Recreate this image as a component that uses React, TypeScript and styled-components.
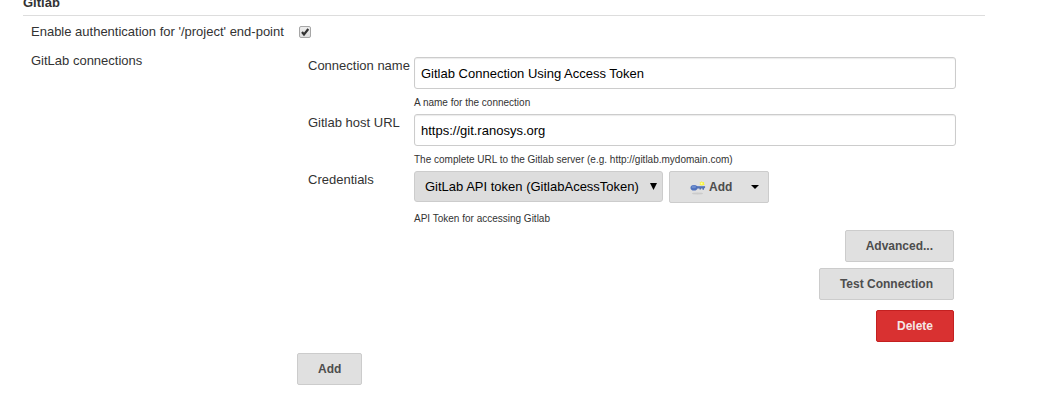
import React from "react";
import styled, { createGlobalStyle, css } from "styled-components";

const GlobalStyle = createGlobalStyle`
  *, *::before, *::after { box-sizing: border-box; }
  body {
    margin: 0;
    background: #fff;
    color: #333;
    font: 13px/16px "Liberation Sans", Arial, sans-serif;
  }
  button, input, select { font-family: inherit; }
`;

const Section = styled.form`
  margin: 0 57px 0 23px;
`;

const SectionTitle = styled.h2`
  margin: -5px 0 8px;
  padding-bottom: 4px;
  border-bottom: 1px solid #ddd;
  font-size: 13px;
  line-height: 16px;
`;

const Setting = styled.div`
  display: grid;
  grid-template-columns: 266px minmax(0, 1fr);
  padding-left: 8px;
  margin-bottom: 13px;
`;

const SettingLabel = styled.label``;

const CheckHolder = styled.span`
  position: relative;
  display: block;
  width: 12px;
  height: 12px;
  margin: 2px;
`;

const Checkbox = styled.input`
  appearance: none;
  display: block;
  width: 100%;
  height: 100%;
  margin: 0;
  border: 1px solid #a6a6a6;
  border-radius: 2px;
  background: linear-gradient(#ededed, #dedede);
  & + svg { display: none; }
  &:checked + svg { display: block; }
`;

const CheckMark = styled.svg`
  position: absolute;
  inset: 0;
  pointer-events: none;
`;

const Connection = styled.div`
  padding: 4px 29px 0 11px;
`;

const Field = styled.div`
  display: grid;
  grid-template-columns: 106px minmax(0, 1fr);
`;

const FieldLabel = styled.label`
  padding-top: 1px;
  white-space: nowrap;
`;

const TextInput = styled.input`
  display: block;
  width: 100%;
  height: 32px;
  padding: 0 6px;
  border: 1px solid #ccc;
  border-radius: 3px;
  box-shadow: inset 0 1px 1px rgba(0, 0, 0, 0.08);
  background: #fff;
  color: #000;
  font-size: 13px;
`;

const Help = styled.p<{ $spacious?: boolean }>`
  margin: ${(p) => (p.$spacious ? "9px 0 5px" : "7px 0 5px")};
  font-size: 10px;
  line-height: 13px;
`;

const CredentialRow = styled.div`
  display: flex;
  gap: 6px;
`;

const SelectHolder = styled.span`
  position: relative;
  height: 31px;
`;

const Select = styled.select`
  appearance: none;
  height: 100%;
  padding: 0 22px 0 10px;
  border: 1px solid #ccc;
  border-radius: 3px;
  background: #ddd;
  color: #000;
  font-size: 13px;
`;

const SelectArrow = styled.svg`
  position: absolute;
  right: 6px;
  top: 12px;
  pointer-events: none;
`;

const Button = styled.button<{ $danger?: boolean }>`
  display: inline-flex;
  align-items: center;
  height: 32px;
  padding: 0 20px;
  border: 1px solid #ccc;
  border-radius: 2px;
  background: #e0e0e0;
  color: #4d4d4d;
  font-size: 12px;
  font-weight: bold;
  ${(p) =>
    p.$danger &&
    css`
      border-color: #c42020;
      background: #d93131;
      color: #f5e6e6;
    `}
`;

const MenuButton = styled(Button)`
  padding-right: 9px;
`;

const KeyIcon = styled.svg`
  margin-right: 3px;
`;

const Caret = styled.svg`
  margin-left: 19px;
`;

const Actions = styled.div`
  display: flex;
  flex-direction: column;
  align-items: flex-end;
  gap: 6px;
  padding-right: 2px;
`;

const DeleteRow = styled.div`
  padding-top: 4px;
`;

const AddRow = styled.div`
  margin-top: 11px;
`;

const Key = () => (
  <KeyIcon width="16" height="16" viewBox="0 0 16 16" aria-hidden="true">
    <ellipse cx="7.5" cy="14.5" rx="5.5" ry="0.9" fill="#cbcbcb" />
    <path d="M11.500 2l1 1.200 1.700-.2-.3 1.500.9 1-1.400.8-2.200.3-1.600-.9.500-1.200-.4-1.400 1.400.2z" fill="#f8f53a" />
    <circle cx="11.600" cy="4.400" r="1" fill="#fdfcb0" />
    <path d="M5 7h9.500l.8 1-.8 1.300H14v1.500h-1.500V9.500H11v1H9.500v-1H6z" fill="#526fae" />
    <path d="M6 7.700h8.500" stroke="#7f9bd2" strokeWidth="0.700" />
    <ellipse cx="4" cy="8.700" rx="3.500" ry="2.800" fill="#4f71bd" />
    <ellipse cx="3.800" cy="7.900" rx="2.300" ry="1.300" fill="#6d8dce" />
  </KeyIcon>
);

export default function App() {
  return (
    <>
      <GlobalStyle />
      <Section onSubmit={(e) => e.preventDefault()}>
        <SectionTitle>Gitlab</SectionTitle>
        <Setting>
          <SettingLabel htmlFor="auth">Enable authentication for '/project' end-point</SettingLabel>
          <CheckHolder>
            <Checkbox id="auth" type="checkbox" defaultChecked />
            <CheckMark width="12" height="12" viewBox="0 0 12 12" aria-hidden="true">
              <path d="M3 6l2 2.500L9.300 3" fill="none" stroke="#333" strokeWidth="2.200" />
            </CheckMark>
          </CheckHolder>
        </Setting>
        <Setting>
          <SettingLabel as="span">GitLab connections</SettingLabel>
          <div>
            <Connection>
              <Field>
                <FieldLabel htmlFor="name">Connection name</FieldLabel>
                <div>
                  <TextInput id="name" type="text" defaultValue="Gitlab Connection Using Access Token" />
                  <Help>A name for the connection</Help>
                </div>
              </Field>
              <Field>
                <FieldLabel htmlFor="host">Gitlab host URL</FieldLabel>
                <div>
                  <TextInput id="host" type="text" defaultValue="https://git.ranosys.org" />
                  <Help>The complete URL to the Gitlab server (e.g. http://gitlab.mydomain.com)</Help>
                </div>
              </Field>
              <Field>
                <FieldLabel htmlFor="credentials">Credentials</FieldLabel>
                <div>
                  <CredentialRow>
                    <SelectHolder>
                      <Select id="credentials">
                        <option>GitLab API token (GitlabAcessToken)</option>
                      </Select>
                      <SelectArrow width="7" height="7" viewBox="0 0 7 7" aria-hidden="true">
                        <path d="M0 0h7L3.500 7z" />
                      </SelectArrow>
                    </SelectHolder>
                    <MenuButton type="button">
                      <Key />
                      Add
                      <Caret width="8" height="4" viewBox="0 0 8 4" aria-hidden="true">
                        <path d="M0 0h8L4 4z" />
                      </Caret>
                    </MenuButton>
                  </CredentialRow>
                  <Help $spacious>API Token for accessing Gitlab</Help>
                </div>
              </Field>
              <Actions>
                <Button type="button">Advanced...</Button>
                <Button type="button">Test Connection</Button>
                <DeleteRow>
                  <Button type="button" $danger>Delete</Button>
                </DeleteRow>
              </Actions>
            </Connection>
            <AddRow>
              <Button type="button">Add</Button>
            </AddRow>
          </div>
        </Setting>
      </Section>
    </>
  );
}
